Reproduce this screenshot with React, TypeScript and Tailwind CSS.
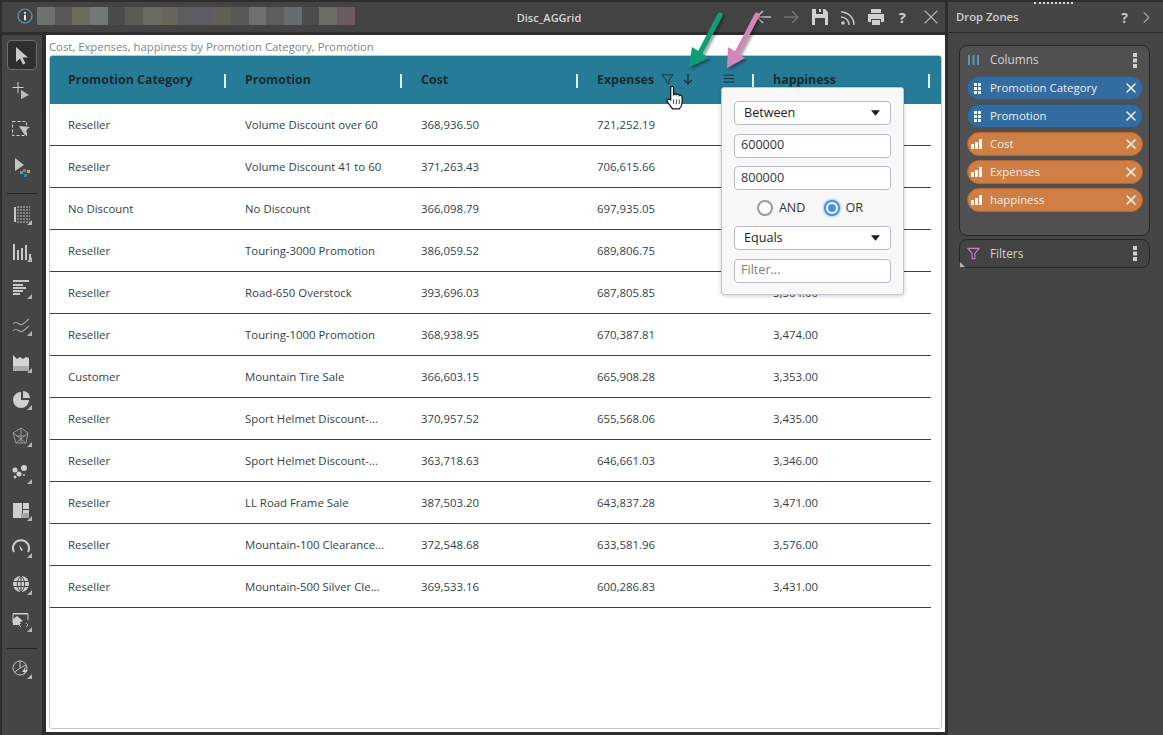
import * as React from "react";
import { X, ChevronRight } from "lucide-react";

const uiFont = { fontFamily: '"Open Sans", "Noto Sans", sans-serif' };

const rows = [
  ["Reseller", "Volume Discount over 60", "368,936.50", "721,252.19", ""],
  ["Reseller", "Volume Discount 41 to 60", "371,263.43", "706,615.66", ""],
  ["No Discount", "No Discount", "366,098.79", "697,935.05", ""],
  ["Reseller", "Touring-3000 Promotion", "386,059.52", "689,806.75", ""],
  ["Reseller", "Road-650 Overstock", "393,696.03", "687,805.85", "3,504.00"],
  ["Reseller", "Touring-1000 Promotion", "368,938.95", "670,387.81", "3,474.00"],
  ["Customer", "Mountain Tire Sale", "366,603.15", "665,908.28", "3,353.00"],
  ["Reseller", "Sport Helmet Discount-...", "370,957.52", "655,568.06", "3,435.00"],
  ["Reseller", "Sport Helmet Discount-...", "363,718.63", "646,661.03", "3,346.00"],
  ["Reseller", "LL Road Frame Sale", "387,503.20", "643,837.28", "3,471.00"],
  ["Reseller", "Mountain-100 Clearance...", "372,548.68", "633,581.96", "3,576.00"],
  ["Reseller", "Mountain-500 Silver Cle...", "369,533.16", "600,286.83", "3,431.00"],
];

const blurSwatches = [
  ["#6d726d", 18], ["#5c5757", 17], ["#6d6c60", 18], ["#727777", 18], ["#4a4c4b", 17],
  ["#5b5a55", 18], ["#6a6b65", 19], ["#686659", 16], ["#5c5d5d", 18], ["#5e5c62", 17],
  ["#625f58", 18], ["#585858", 18], ["#6e7070", 17], ["#5c5e5d", 18], ["#666c6e", 18],
  ["#4c4c4e", 17], ["#6e6d6a", 18], ["#6c5a5e", 18],
] as const;

const corner = <path d="M16 21h5v-5z" fill="#b5b5b5" />;

// left toolbar, drawn by hand to follow the picture
const toolIcons: React.ReactNode[] = [
  <>
    <path d="M5 3v15l4-3.500 3 6 2.500-1.200-3-5.800h5.500z" fill="#c9c9c9" />
  </>,
  <>
    <path d="M7 2v11M1.500 7.500h11" stroke="#cfcfcf" strokeWidth="1" fill="none" />
    <path d="M10 10v9l8-4z" fill="#bdbdbd" />
  </>,
  <>
    <rect x="1.500" y="3.500" width="14" height="14" stroke="#d0d0d0" strokeDasharray="3 2" fill="none" />
    <path d="M8 8l11 1-4 3 1 6-3-2z" fill="#c4c4c4" />
  </>,
  <>
    <path d="M4 2v13l9-6z" fill="#c4c4c4" />
    <rect x="12" y="13" width="3" height="3" fill="#d9534f" />
    <rect x="16" y="14" width="3" height="3" fill="#e8a33d" />
    <rect x="9" y="15" width="3" height="3" fill="#36b6a5" />
    <rect x="13" y="18" width="3" height="3" fill="#3b82c4" />
  </>,
  <>
    <path d="M3 3h2v15H3z" fill="#c8c8c8" />
    <path d="M6 3h13M6 6h13M6 9h13M6 12h13M6 15h13M6 18h13" stroke="#c8c8c8" strokeDasharray="2 1" fill="none" />
    {corner}
  </>,
  <>
    <path d="M2 3h2v16H2zM6 9h2v10H6zM10 7h2v12h-2zM14 4h2v15h-2zM18 13h2v6h-2z" fill="#c8c8c8" />
    {corner}
  </>,
  <>
    <path d="M2 2h16v2H2zM2 6h10v2H2zM2 9h13v2H2zM2 12h10v2H2zM2 15h7v2H2z" fill="#c8c8c8" />
    {corner}
  </>,
  <>
    <path d="M2 9c4-5 6 3 10 0s4-4 6-5M2 16c4-5 6 3 10 0s4-4 6-5" stroke="#9f9f9f" strokeWidth="1.200" fill="none" />
    {corner}
  </>,
  <>
    <path d="M2 3l4 4 3-2 3 2 3-2 3 1v13H2z" fill="#d4d4d4" />
    <path d="M2 14h16v5H2z" fill="#ababab" />
    {corner}
  </>,
  <>
    <path d="M10 3a8 8 0 1 0 8 8h-8z" fill="#cfcfcf" />
    <path d="M12 2v7h7a7 7 0 0 0-7-7z" fill="#cfcfcf" />
    {corner}
  </>,
  <>
    <path d="M10 2l7 5-2 10H5L2 7z M10 2v15M2 7l13 10M17 7L5 17M6 10h8" stroke="#9a9a9a" fill="none" />
    {corner}
  </>,
  <>
    <circle cx="13" cy="5" r="3" fill="#d0d0d0" />
    <circle cx="4" cy="7" r="2.500" fill="#d0d0d0" />
    <circle cx="8" cy="11" r="2.500" fill="#d0d0d0" />
    <circle cx="4" cy="14" r="1.500" fill="#d0d0d0" />
    <circle cx="13" cy="12" r="1" fill="#d0d0d0" />
    {corner}
  </>,
  <>
    <path d="M2 3h9v15H2zM12 3h6v6h-6zM12 10h6v8h-6z" fill="#d0d0d0" />
    <path d="M10 13h8v5h-8z" fill="#a5a5a5" />
    {corner}
  </>,
  <>
    <path d="M3 15a8 8 0 1 1 14 0" stroke="#cfcfcf" strokeWidth="2" fill="none" />
    <path d="M10 14l-2-6 4 5z" fill="#cfcfcf" />
    {corner}
  </>,
  <>
    <circle cx="10" cy="10" r="8" fill="#cfcfcf" />
    <path d="M2 7.500h16M2 12.500h16M10 2v16M10 2c-5 5-5 11 0 16M10 2c5 5 5 11 0 16" stroke="#444" fill="none" />
    {corner}
  </>,
  <>
    <path d="M2 12V3h15v6M2 2.500h15" stroke="#cfcfcf" fill="none" />
    <path d="M2 14V8l4-3 6 5-3 1v3z" fill="#cfcfcf" />
    <path d="M10 12l-2 2 2 2M15 12l2 2-2 2" stroke="#b5b5b5" fill="none" />
    {corner}
  </>,
  <>
    <circle cx="9" cy="10" r="7" stroke="#c4c4c4" fill="none" />
    <path d="M9 10V3M9 10l6-3M9 10l-5 4" stroke="#c4c4c4" fill="none" />
    <path d="M15 8l-4 6h3l-2 4 5-6h-3z" fill="#d0d0d0" />
    {corner}
  </>,
];

function LeftToolbar() {
  return (
    <div className="flex w-[40px] shrink-0 flex-col items-center bg-[#454545] pt-[5px]">
      <div className="flex h-[30px] w-[30px] items-center justify-center rounded-[4px] border border-[#6e6e6e] bg-[#2f2f2f]">
        <svg viewBox="0 0 22 22" className="h-[22px] w-[22px]">{toolIcons[0]}</svg>
      </div>
      <div className="mt-[10px] flex flex-col gap-[16px]">
        {toolIcons.slice(1, 4).map((ic, i) => (
          <svg key={i} viewBox="0 0 22 22" className="h-[22px] w-[22px]">{ic}</svg>
        ))}
      </div>
      <div className="mt-[15px] mb-[10px] h-px w-[30px] bg-[#222222]" />
      <div className="flex flex-col gap-[15px]">
        {toolIcons.slice(4, 16).map((ic, i) => (
          <svg key={i} viewBox="0 0 22 22" className="h-[22px] w-[22px]">{ic}</svg>
        ))}
      </div>
      <div className="mt-[15px] mb-[9px] h-px w-[30px] bg-[#222222]" />
      <svg viewBox="0 0 22 22" className="h-[22px] w-[22px]">{toolIcons[16]}</svg>
    </div>
  );
}

function TitleBar() {
  return (
    <div className="relative flex h-[30px] shrink-0 items-center bg-[#434343] pl-[15px] pr-[2px]">
      <div className="-mt-[2px] flex items-center">
        <svg viewBox="0 0 16 16" className="h-[16px] w-[16px]">
          <circle cx="8" cy="8" r="7" fill="none" stroke="#5b9cc4" strokeWidth="1.200" />
          <circle cx="8" cy="4.800" r="1.100" fill="#e6e6e6" />
          <rect x="7" y="6.800" width="2" height="5.500" fill="#e6e6e6" />
        </svg>
        <div className="ml-[4px] flex h-[18px]">
          {blurSwatches.map(([c, w], i) => (
            <div key={i} className="h-full" style={{ background: c, width: w }} />
          ))}
        </div>
      </div>
      <div className="absolute inset-x-0 top-[7px] pl-[151px] text-center text-[11px] font-semibold leading-[17px] text-[#d6d6d6]">
        Disc_AGGrid
      </div>
      <div className="ml-auto flex items-center">
        <svg viewBox="0 0 18 18" className="mr-[9px] h-[18px] w-[18px]" fill="none" stroke="#bcbcbc" strokeWidth="1.600">
          <path d="M16 9H2M8 3L2 9l6 6" />
        </svg>
        <svg viewBox="0 0 18 18" className="mr-[11px] h-[18px] w-[18px]" fill="none" stroke="#727272" strokeWidth="1.600">
          <path d="M2 9h14M10 3l6 6-6 6" />
        </svg>
        <svg viewBox="0 0 18 18" className="mr-[11px] h-[18px] w-[18px]" fill="#d0d0d0">
          <path d="M1 1h13l3 3v13H1zM5 1v5h7V1h-2v3H8V1zM4 10v7h10v-7z" fillRule="evenodd" />
        </svg>
        <svg viewBox="0 0 18 18" className="mr-[9px] h-[18px] w-[18px]" fill="none" stroke="#c4c4c4" strokeWidth="1.500">
          <path d="M1 9a8 8 0 0 1 8 8M1 4a13 13 0 0 1 13 13" />
          <circle cx="3" cy="15" r="1.800" fill="#d0d0d0" stroke="none" />
        </svg>
        <svg viewBox="0 0 18 18" className="mr-[14px] h-[18px] w-[18px]" fill="#d0d0d0">
          <path d="M4 1h10v4H4zM1 6h16v8h-3v-3H4v3H1zM5 12h8v5H5z" />
        </svg>
        <span className="mr-[13px] text-[15px] font-bold leading-none text-[#d0d0d0]">?</span>
        <X className="h-[24px] w-[24px] text-[#b5b5b5]" strokeWidth={1.100} />
      </div>
    </div>
  );
}

function HeaderCell({ label, children, first }: { label: string; children?: React.ReactNode; first?: boolean }) {
  return (
    <div className={"relative flex h-full items-center pl-[18px] pt-[1px] text-[12.400px] font-bold text-[#1d2a30] " + (first ? "w-[177px]" : "w-[176px]")}>
      <span>{label}</span>
      {children}
      <span className="absolute right-[1px] top-[18px] h-[14px] w-[2px] bg-[#e4eef2]" />
    </div>
  );
}

function Grid() {
  return (
    <div className="relative mx-[3px] min-h-0 flex-1 rounded-[3px] border border-[#c3c6cc] bg-white">
      <div className="flex h-[48px] items-center rounded-t-[2px] bg-[#267b96]">
        <HeaderCell label="Promotion Category" first />
        <HeaderCell label="Promotion" />
        <HeaderCell label="Cost" />
        <HeaderCell label="Expenses">
          <svg viewBox="0 0 14 14" className="absolute left-[82px] top-[17px] h-[13px] w-[13px]" fill="none" stroke="#1d2a30">
            <path d="M1 2h12L8.500 7.500V12l-3-2V7.500z" />
          </svg>
          <svg viewBox="0 0 14 14" className="absolute left-[102px] top-[16px] h-[14px] w-[14px]" fill="none" stroke="#1d2a30" strokeWidth="1.100">
            <path d="M7 2v10M3 8l4 4 4-4" />
          </svg>
          <svg viewBox="0 0 14 14" className="absolute left-[144px] top-[17px] h-[12px] w-[12px]" fill="none" stroke="#1d2a30" strokeWidth="1.100">
            <path d="M1 2.500h12M1 6.500h12M1 10.500h12" />
          </svg>
        </HeaderCell>
        <HeaderCell label="happiness" />
      </div>
      <div className="mr-[10px]">
        {rows.map((r, i) => (
          <div key={i} className="flex h-[42px] items-center border-b border-[#3a4148] text-[11.400px] text-[#333f48]">
            {r.map((c, j) => (
              <div key={j} className={"pl-[18px] whitespace-nowrap " + (j === 0 ? "w-[177px]" : "w-[176px]")}>{c}</div>
            ))}
          </div>
        ))}
      </div>
      <FilterPopup />
    </div>
  );
}

function FieldBox({ children, muted }: { children: React.ReactNode; muted?: boolean }) {
  return (
    <div className={"flex h-[24px] shrink-0 items-center rounded-[4px] border border-[#b9bcc6] bg-white pl-[6px] text-[12.600px] " + (muted ? "text-[#7b7b7b]" : "text-[#333333]")}>
      {children}
    </div>
  );
}

function SelectBox({ label }: { label: string }) {
  return (
    <div className="flex h-[24px] shrink-0 items-center justify-between rounded-[4px] border border-[#b9bcc6] bg-white pl-[9px] pr-[10px] text-[12.600px] text-[#222222]">
      <span>{label}</span>
      <svg viewBox="0 0 10 6" className="h-[6px] w-[9px]"><path d="M0 0h10L5 6z" fill="#1b1b1b" /></svg>
    </div>
  );
}

function FilterPopup() {
  return (
    <div className="absolute left-[671px] top-[31px] flex h-[208px] w-[183px] flex-col gap-[8.500px] rounded-[3px] border border-[#c3c6cc] bg-[#f8f8f8] px-[12px] pt-[13px] shadow-[0_1px_4px_rgba(0,0,0,0.2)]">
      <SelectBox label="Between" />
      <FieldBox>600000</FieldBox>
      <FieldBox>800000</FieldBox>
      <div className="flex h-[19px] shrink-0 items-center justify-center pr-[5px] text-[12.600px] text-[#333333]">
        <span className="h-[16px] w-[16px] rounded-full border-2 border-[#9a9a9a] bg-white" />
        <span className="ml-[6px] mr-[18px]">AND</span>
        <span className="flex h-[16px] w-[16px] items-center justify-center rounded-full border-2 border-[#4a90e2] bg-white shadow-[0_0_3px_#4a90e2]">
          <span className="h-[8px] w-[8px] rounded-full bg-[#4a90e2]" />
        </span>
        <span className="ml-[6px]">OR</span>
      </div>
      <SelectBox label="Equals" />
      <FieldBox muted>Filter...</FieldBox>
    </div>
  );
}

function Arrows() {
  return (
    <>
      <svg className="pointer-events-none absolute left-[634px] top-[-25px] h-[70px] w-[90px]" viewBox="0 0 90 70">
        <defs>
          <filter id="sh" x="-30%" y="-30%" width="170%" height="170%">
            <feDropShadow dx="2" dy="2" stdDeviation="1.500" floodColor="#000" floodOpacity="0.4" />
          </filter>
        </defs>
        <g filter="url(#sh)">
          <path d="M40 5L20 43" stroke="#0f9e75" strokeWidth="5" strokeLinecap="round" fill="none" />
          <path d="M9 57l3-20 17 11z" fill="#0f9e75" />
          <path d="M77 5L57 43" stroke="#cf86b8" strokeWidth="5" strokeLinecap="round" fill="none" />
          <path d="M47 58l1-21 17 11z" fill="#cf86b8" />
        </g>
      </svg>
      <svg className="pointer-events-none absolute left-[619px] top-[50px] h-[25px] w-[19px]" viewBox="0 0 20 26">
        <path
          d="M6 2c1-1 3-1 3 1v7c1-1 3-1 3 0 1-1 3-1 3 1 1-1 3 0 3 1v6c0 3-2 6-3 7H8c-1-2-6-7-6-9 0-1 2-2 4-.500z"
          fill="#fff"
          stroke="#111"
          strokeWidth="1.300"
        />
        <path d="M9 15v5M12 15v5M15 15v5" stroke="#111" strokeWidth="0.800" />
      </svg>
    </>
  );
}

function Dots() {
  return (
    <svg viewBox="0 0 4 15" className="ml-auto mr-[6px] h-[15px] w-[4px]" fill="#d0d0d0">
      <path d="M0 0h4v4H0zM0 5.500h4v4H0zM0 11h4v4H0z" />
    </svg>
  );
}

function Pill({ label, kind }: { label: string; kind: "dim" | "measure" }) {
  const dim = kind === "dim";
  return (
    <div
      className={
        "flex h-[24px] items-center rounded-full border pl-[4px] pr-[4px] text-[11.400px] text-[#eeeeee] " +
        (dim ? "border-[#2c5a85] bg-[#336ca0]" : "border-[#b5642f] bg-[#cf7e44]")
      }
    >
      {dim ? (
        <svg viewBox="0 0 7 11" className="ml-[2px] h-[11px] w-[7px]" fill="#ffffff">
          <path d="M0 0h3v3H0zM4 0h3v3H4zM0 4h3v3H0zM4 4h3v3H4zM0 8h3v3H0zM4 8h3v3H4z" />
        </svg>
      ) : (
        <svg viewBox="0 0 12 10" className="-ml-[1px] h-[10px] w-[12px]" fill="#ffffff">
          <path d="M0 5h3v5H0zM4 3h3v7H4zM8 0h3v10H8z" />
        </svg>
      )}
      <span className={dim ? "ml-[9px]" : "ml-[7px]"}>{label}</span>
      <X className="ml-auto -mr-[1px] h-[16px] w-[16px] text-[#ffffff]" strokeWidth={2} />
    </div>
  );
}

function DropZones() {
  return (
    <div className="relative flex h-full w-[215px] shrink-0 flex-col bg-[#454545]">
      <div className="absolute left-[86px] top-0 w-[39px] border-t-2 border-dotted border-[#d8d8d8]" />
      <div className="box-content flex h-[30px] shrink-0 items-center border-b border-[#2b2b2b] pl-[8px] pr-[7px] text-[11.300px] font-semibold text-[#d0d0d0]">
        Drop Zones
        <span className="ml-auto text-[14px] font-bold text-[#c8c8c8]">?</span>
        <ChevronRight className="ml-[9px] h-[19px] w-[19px] text-[#a5a5a5]" strokeWidth={1.400} />
      </div>
      <div className="ml-[11px] mr-[13px] mt-[12px] h-[191px] rounded-[8px] border border-[#262626] bg-[#505050] pl-[7px] pr-[6px]">
        <div className="mb-[2px] flex h-[28px] items-center text-[11.800px] text-[#d4d4d4]">
          <svg viewBox="0 0 12 10" className="ml-[1px] h-[10px] w-[12px]" fill="#5d95bd">
            <path d="M0 0h2v10H0zM4.500 0h2v10h-2zM9 0h2v10H9z" />
          </svg>
          <span className="ml-[10px]">Columns</span>
          <Dots />
        </div>
        <div className="flex flex-col gap-[4px]">
          <Pill label="Promotion Category" kind="dim" />
          <Pill label="Promotion" kind="dim" />
          <Pill label="Cost" kind="measure" />
          <Pill label="Expenses" kind="measure" />
          <Pill label="happiness" kind="measure" />
        </div>
      </div>
      <div className="relative ml-[11px] mr-[13px] mt-[3px] flex h-[29px] items-center rounded-[8px] border border-[#262626] bg-[#434343] pl-[7px] pr-[6px] text-[11.800px] text-[#d4d4d4]">
        <svg viewBox="0 0 14 14" className="h-[13px] w-[13px]" fill="none" stroke="#c77fc0" strokeWidth="1.200">
          <path d="M1 1.500h12L8.500 7v5.500h-3V7z" />
        </svg>
        <span className="ml-[10px]">Filters</span>
        <Dots />
        <span className="absolute bottom-0 left-0 h-0 w-0 border-b-[5px] border-r-[5px] border-b-[#b5b5b5] border-r-transparent" />
      </div>
    </div>
  );
}

export default function App() {
  return (
    <div style={uiFont} className="flex h-[735px] w-[1163px] flex-col overflow-hidden bg-[#2d2d2d] pt-[2px]">
      <div className="flex min-h-0 flex-1">
        <div className="ml-[2px] flex min-w-0 flex-1 flex-col">
          <TitleBar />
          <div className="mt-[3px] flex min-h-0 flex-1">
            <LeftToolbar />
            <div className="relative ml-[4px] mb-[3px] flex w-[899px] min-w-0 flex-col bg-white">
              <div className="h-[20px] pl-[3px] pt-[4px] text-[11.300px] leading-[16px] text-[#7c858c]">
                Cost, Expenses, happiness by Promotion Category, Promotion
              </div>
              <div className="mb-[3px] flex min-h-0 flex-1 flex-col">
                <Grid />
              </div>
              <Arrows />
            </div>
          </div>
        </div>
        <div className="ml-[3px] h-full">
          <DropZones />
        </div>
      </div>
    </div>
  );
}
